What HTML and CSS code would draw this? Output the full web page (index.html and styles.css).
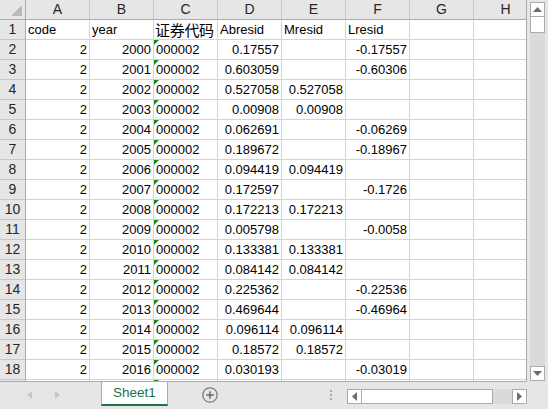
FILE: index.html
```html
<!DOCTYPE html>
<html lang="zh">
<head>
<meta charset="utf-8">
<title>Sheet1</title>
<link rel="stylesheet" href="styles.css">
</head>
<body>
<div class="app">
  <div class="main">
    <div class="sheet">
      <div class="grid">
        <div class="c h corner"><svg class="corner-tri" width="11" height="11" viewBox="0 0 11 11"><polygon points="11,0 11,11 0,11" fill="#b9b9b9"/></svg></div>
        <div class="c h colh">A</div><div class="c h colh">B</div><div class="c h colh">C</div><div class="c h colh">D</div><div class="c h colh">E</div><div class="c h colh">F</div><div class="c h colh">G</div><div class="c h colh">H</div>

        <div class="c h rowh">1</div><div class="c">code</div><div class="c">year</div><div class="c cjk">证券代码</div><div class="c">Abresid</div><div class="c">Mresid</div><div class="c">Lresid</div><div class="c"></div><div class="c"></div>

        <div class="c h rowh">2</div><div class="c n">2</div><div class="c n">2000</div><div class="c tri">000002</div><div class="c n">0.17557</div><div class="c n"></div><div class="c n">-0.17557</div><div class="c"></div><div class="c"></div>
        <div class="c h rowh">3</div><div class="c n">2</div><div class="c n">2001</div><div class="c tri">000002</div><div class="c n">0.603059</div><div class="c n"></div><div class="c n">-0.60306</div><div class="c"></div><div class="c"></div>
        <div class="c h rowh">4</div><div class="c n">2</div><div class="c n">2002</div><div class="c tri">000002</div><div class="c n">0.527058</div><div class="c n">0.527058</div><div class="c n"></div><div class="c"></div><div class="c"></div>
        <div class="c h rowh">5</div><div class="c n">2</div><div class="c n">2003</div><div class="c tri">000002</div><div class="c n">0.00908</div><div class="c n">0.00908</div><div class="c n"></div><div class="c"></div><div class="c"></div>
        <div class="c h rowh">6</div><div class="c n">2</div><div class="c n">2004</div><div class="c tri">000002</div><div class="c n">0.062691</div><div class="c n"></div><div class="c n">-0.06269</div><div class="c"></div><div class="c"></div>
        <div class="c h rowh">7</div><div class="c n">2</div><div class="c n">2005</div><div class="c tri">000002</div><div class="c n">0.189672</div><div class="c n"></div><div class="c n">-0.18967</div><div class="c"></div><div class="c"></div>
        <div class="c h rowh">8</div><div class="c n">2</div><div class="c n">2006</div><div class="c tri">000002</div><div class="c n">0.094419</div><div class="c n">0.094419</div><div class="c n"></div><div class="c"></div><div class="c"></div>
        <div class="c h rowh">9</div><div class="c n">2</div><div class="c n">2007</div><div class="c tri">000002</div><div class="c n">0.172597</div><div class="c n"></div><div class="c n">-0.1726</div><div class="c"></div><div class="c"></div>
        <div class="c h rowh">10</div><div class="c n">2</div><div class="c n">2008</div><div class="c tri">000002</div><div class="c n">0.172213</div><div class="c n">0.172213</div><div class="c n"></div><div class="c"></div><div class="c"></div>
        <div class="c h rowh">11</div><div class="c n">2</div><div class="c n">2009</div><div class="c tri">000002</div><div class="c n">0.005798</div><div class="c n"></div><div class="c n">-0.0058</div><div class="c"></div><div class="c"></div>
        <div class="c h rowh">12</div><div class="c n">2</div><div class="c n">2010</div><div class="c tri">000002</div><div class="c n">0.133381</div><div class="c n">0.133381</div><div class="c n"></div><div class="c"></div><div class="c"></div>
        <div class="c h rowh">13</div><div class="c n">2</div><div class="c n">2011</div><div class="c tri">000002</div><div class="c n">0.084142</div><div class="c n">0.084142</div><div class="c n"></div><div class="c"></div><div class="c"></div>
        <div class="c h rowh">14</div><div class="c n">2</div><div class="c n">2012</div><div class="c tri">000002</div><div class="c n">0.225362</div><div class="c n"></div><div class="c n">-0.22536</div><div class="c"></div><div class="c"></div>
        <div class="c h rowh">15</div><div class="c n">2</div><div class="c n">2013</div><div class="c tri">000002</div><div class="c n">0.469644</div><div class="c n"></div><div class="c n">-0.46964</div><div class="c"></div><div class="c"></div>
        <div class="c h rowh">16</div><div class="c n">2</div><div class="c n">2014</div><div class="c tri">000002</div><div class="c n">0.096114</div><div class="c n">0.096114</div><div class="c n"></div><div class="c"></div><div class="c"></div>
        <div class="c h rowh">17</div><div class="c n">2</div><div class="c n">2015</div><div class="c tri">000002</div><div class="c n">0.18572</div><div class="c n">0.18572</div><div class="c n"></div><div class="c"></div><div class="c"></div>
        <div class="c h rowh">18</div><div class="c n">2</div><div class="c n">2016</div><div class="c tri">000002</div><div class="c n">0.030193</div><div class="c n"></div><div class="c n">-0.03019</div><div class="c"></div><div class="c"></div>
        <div class="c h rowh"></div><div class="c n"></div><div class="c n"></div><div class="c tri"></div><div class="c n"></div><div class="c n"></div><div class="c n"></div><div class="c"></div><div class="c"></div>
      </div>
    </div>
    <div class="vscroll">
      <div class="sbtn"><svg width="9" height="5" viewBox="0 0 9 5"><polygon points="0,5 9,5 4.5,0" fill="#6d6d6d"/></svg></div>
      <div class="vthumb"></div>
      <div class="vtrack"></div>
      <div class="sbtn"><svg width="9" height="5" viewBox="0 0 9 5"><polygon points="0,0 9,0 4.5,5" fill="#6d6d6d"/></svg></div>
    </div>
  </div>
  <div class="tabbar">
    <div class="nav">
      <svg width="5" height="8" viewBox="0 0 5 8"><polygon points="5,0 5,8 0,4" fill="#c6c6c6"/></svg>
      <svg width="5" height="8" viewBox="0 0 5 8"><polygon points="0,0 0,8 5,4" fill="#c6c6c6"/></svg>
    </div>
    <div class="tab">Sheet1</div>
    <div class="add"><svg width="16" height="16" viewBox="0 0 16 16"><circle cx="8" cy="8" r="7.2" fill="none" stroke="#7a7a7a" stroke-width="1.3"/><path d="M8 4.2V11.8M4.2 8H11.8" stroke="#6a6a6a" stroke-width="1.5"/></svg></div>
    <div class="dots"><span></span><span></span><span></span></div>
    <div class="hscroll">
      <div class="hbtn"><svg width="5" height="9" viewBox="0 0 5 9"><polygon points="5,0 5,9 0,4.5" fill="#6d6d6d"/></svg></div>
      <div class="hthumb"></div>
      <div class="htrack"></div>
      <div class="hbtn"><svg width="5" height="9" viewBox="0 0 5 9"><polygon points="0,0 0,9 5,4.5" fill="#6d6d6d"/></svg></div>
    </div>
  </div>
</div>
</body>
</html>
```

FILE: styles.css
```css
* { box-sizing: border-box; }

html, body {
  margin: 0;
  padding: 0;
}

body {
  width: 548px;
  height: 409px;
  overflow: hidden;
  background: #e6e6e6;
  font-family: "Liberation Sans", Arial, sans-serif;
  font-size: 13px;
  color: #000;
}

.app {
  display: flex;
  flex-direction: column;
  width: 548px;
  height: 409px;
}

.main {
  display: flex;
  height: 382px;
}

.sheet {
  width: 527px;
  height: 382px;
  overflow: hidden;
  background: #fff;
  border-right: 1px solid #ababab;
  border-bottom: 1px solid #ababab;
}

.grid {
  display: grid;
  grid-template-columns: 26px repeat(8, 64px);
  grid-auto-rows: 20px;
  width: max-content;
}

.c {
  position: relative;
  border-right: 1px solid #d4d4d4;
  border-bottom: 1px solid #d4d4d4;
  padding: 0 2px;
  line-height: 19px;
  white-space: nowrap;
}

.n { text-align: right; }

.cjk {
  font-family: "Noto Sans CJK SC", "Liberation Sans", sans-serif;
  font-size: 15px;
  line-height: 19px;
  padding-left: 1px;
  letter-spacing: -0.3px;
}

.h {
  background: #e6e6e6;
  border-right-color: #c8c8c8;
  border-bottom-color: #c8c8c8;
  text-align: center;
  color: #262626;
  font-size: 14px;
}

.colh { border-bottom-color: #ababab; }
.rowh { border-right-color: #ababab; padding: 0; }

.corner {
  border-right-color: #ababab;
  border-bottom-color: #ababab;
}

.corner-tri {
  position: absolute;
  right: 3px;
  bottom: 3px;
}

.tri::before {
  content: "";
  position: absolute;
  left: 0;
  top: 0;
  width: 0;
  height: 0;
  border-top: 5px solid #1b8a1b;
  border-right: 5px solid transparent;
}

/* vertical scrollbar */
.vscroll {
  width: 21px;
  height: 382px;
  padding: 2px 3px 1px 3px;
  display: flex;
  flex-direction: column;
}

.sbtn {
  height: 15px;
  background: #fff;
  border: 1px solid #ababab;
  display: flex;
  align-items: center;
  justify-content: center;
  flex: none;
}

.vthumb {
  height: 16px;
  background: #fff;
  border: 1px solid #ababab;
  border-top: none;
  flex: none;
}

.vtrack {
  flex: 1;
  background: #dadada;
}

/* sheet tabs bar */
.tabbar {
  height: 27px;
  display: flex;
  align-items: flex-start;
}

.nav {
  width: 101px;
  height: 24px;
  display: flex;
  align-items: center;
  padding-left: 27px;
  gap: 23px;
  padding-top: 2px;
}

.tab {
  width: 67px;
  height: 24px;
  background: #fff;
  border-left: 1px solid #ababab;
  border-right: 1px solid #ababab;
  border-bottom: 2px solid #217346;
  color: #217346;
  text-align: center;
  line-height: 21px;
  font-size: 13.5px;
}

.add {
  margin-left: 34px;
  margin-top: 5px;
  width: 16px;
  height: 16px;
}

.add svg { display: block; }

.dots {
  margin-left: 112px;
  margin-top: 8px;
  width: 2px;
  display: flex;
  flex-direction: column;
  gap: 2px;
}

.dots span {
  width: 2px;
  height: 2px;
  background: #a8a8a8;
}

.hscroll {
  margin-left: 15px;
  margin-top: 7px;
  width: 180px;
  height: 15px;
  display: flex;
}

.hbtn {
  width: 15px;
  height: 15px;
  background: #fff;
  border: 1px solid #ababab;
  display: flex;
  align-items: center;
  justify-content: center;
  flex: none;
}

.hthumb {
  width: 131px;
  background: #fff;
  border: 1px solid #ababab;
  border-left: none;
  flex: none;
}

.htrack {
  flex: 1;
  background: #dadada;
}
```
